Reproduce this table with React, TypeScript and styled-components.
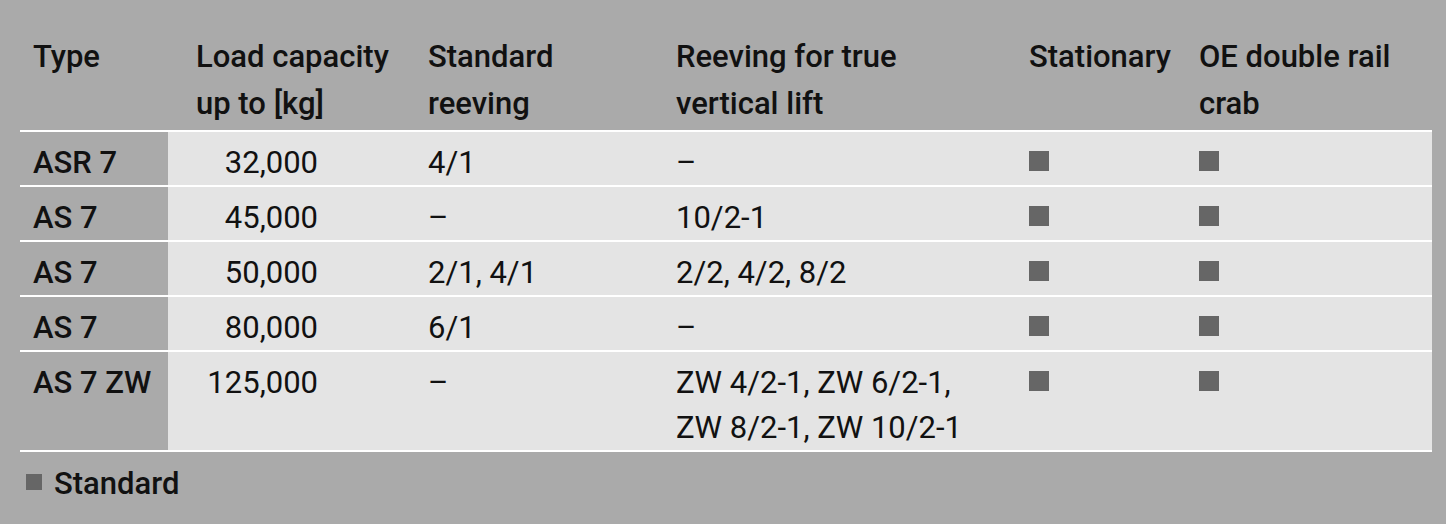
import styled, { createGlobalStyle } from "styled-components";

const colors = {
  page: "#aaaaaa",
  cell: "#e4e4e4",
  rule: "#ffffff",
  mark: "#666666",
  text: "#111111",
};

const GlobalStyle = createGlobalStyle`
  html, body {
    margin: 0;
    padding: 0;
    height: 100%;
    background-color: ${colors.page};
  }

  body {
    font-family: Roboto, "Liberation Sans", Arial, sans-serif;
    color: ${colors.text};
  }
`;

const Page = styled.div`
  min-height: 524px;
  padding: 33px 14px 0 20px;
  box-sizing: border-box;
  background-color: ${colors.page};
`;

const Table = styled.div`
  display: grid;
  grid-template-columns: 148px 247px 248px 353px 170px 1fr;
  font-size: 31px;
`;

const HeadCell = styled.div`
  padding: 0 0 3px 13px;
  line-height: 47px;
  font-weight: 500;
  border-bottom: 2px solid ${colors.rule};

  &.load {
    padding-left: 28px;
  }
`;

const Cell = styled.div<{ $type?: boolean }>`
  padding: 8px 0 0 13px;
  line-height: 45px;
  font-weight: ${(p) => (p.$type ? 500 : 400)};
  background-color: ${(p) => (p.$type ? colors.page : colors.cell)};
  border-bottom: 2px solid ${colors.rule};

  &.load {
    padding-left: 28px;
  }
`;

const Amount = styled.span`
  display: inline-block;
  width: 122px;
  text-align: right;
`;

const Mark = styled.span<{ $size: number; $lift: number }>`
  display: inline-block;
  width: ${(p) => p.$size}px;
  height: ${(p) => p.$size}px;
  margin-bottom: ${(p) => p.$lift}px;
  vertical-align: baseline;
  background-color: ${colors.mark};
`;

const Legend = styled.div`
  margin-top: 9px;
  padding-left: 6px;
  font-size: 31px;
  line-height: 46px;
  font-weight: 500;

  ${Mark} {
    margin-right: 12px;
  }
`;

interface Row {
  type: string;
  load: string;
  standard: string;
  vertical: string[];
  stationary: boolean;
  crab: boolean;
}

const headers = [
  ["Type"],
  ["Load capacity", "up to [kg]"],
  ["Standard", "reeving"],
  ["Reeving for true", "vertical lift"],
  ["Stationary"],
  ["OE double rail", "crab"],
];

const rows: Row[] = [
  { type: "ASR 7", load: "32,000", standard: "4/1", vertical: ["–"], stationary: true, crab: true },
  { type: "AS 7", load: "45,000", standard: "–", vertical: ["10/2-1"], stationary: true, crab: true },
  { type: "AS 7", load: "50,000", standard: "2/1, 4/1", vertical: ["2/2, 4/2, 8/2"], stationary: true, crab: true },
  { type: "AS 7", load: "80,000", standard: "6/1", vertical: ["–"], stationary: true, crab: true },
  {
    type: "AS 7 ZW",
    load: "125,000",
    standard: "–",
    vertical: ["ZW 4/2-1, ZW 6/2-1,", "ZW 8/2-1, ZW 10/2-1"],
    stationary: true,
    crab: true,
  },
];

const Lines = ({ lines }: { lines: string[] }) => (
  <>
    {lines.map((line, i) => (
      <div key={i}>{line}</div>
    ))}
  </>
);

const App = () => {
  return (
    <Page>
      <GlobalStyle />
      <Table>
        {headers.map((lines, i) => (
          <HeadCell key={"h" + i} className={i === 1 ? "load" : ""}>
            <Lines lines={lines} />
          </HeadCell>
        ))}
        {rows.map((row, idx) => [
          <Cell key={"t" + idx} $type>
            {row.type}
          </Cell>,
          <Cell key={"l" + idx} className='load'>
            <Amount>{row.load}</Amount>
          </Cell>,
          <Cell key={"s" + idx}>{row.standard}</Cell>,
          <Cell key={"v" + idx}>
            <Lines lines={row.vertical} />
          </Cell>,
          <Cell key={"st" + idx}>
            {row.stationary ? <Mark $size={20} $lift={2} /> : ""}
          </Cell>,
          <Cell key={"c" + idx}>
            {row.crab ? <Mark $size={20} $lift={2} /> : ""}
          </Cell>,
        ])}
      </Table>
      <Legend>
        <Mark $size={16} $lift={4} />
        <span>Standard</span>
      </Legend>
    </Page>
  );
};

export default App;
